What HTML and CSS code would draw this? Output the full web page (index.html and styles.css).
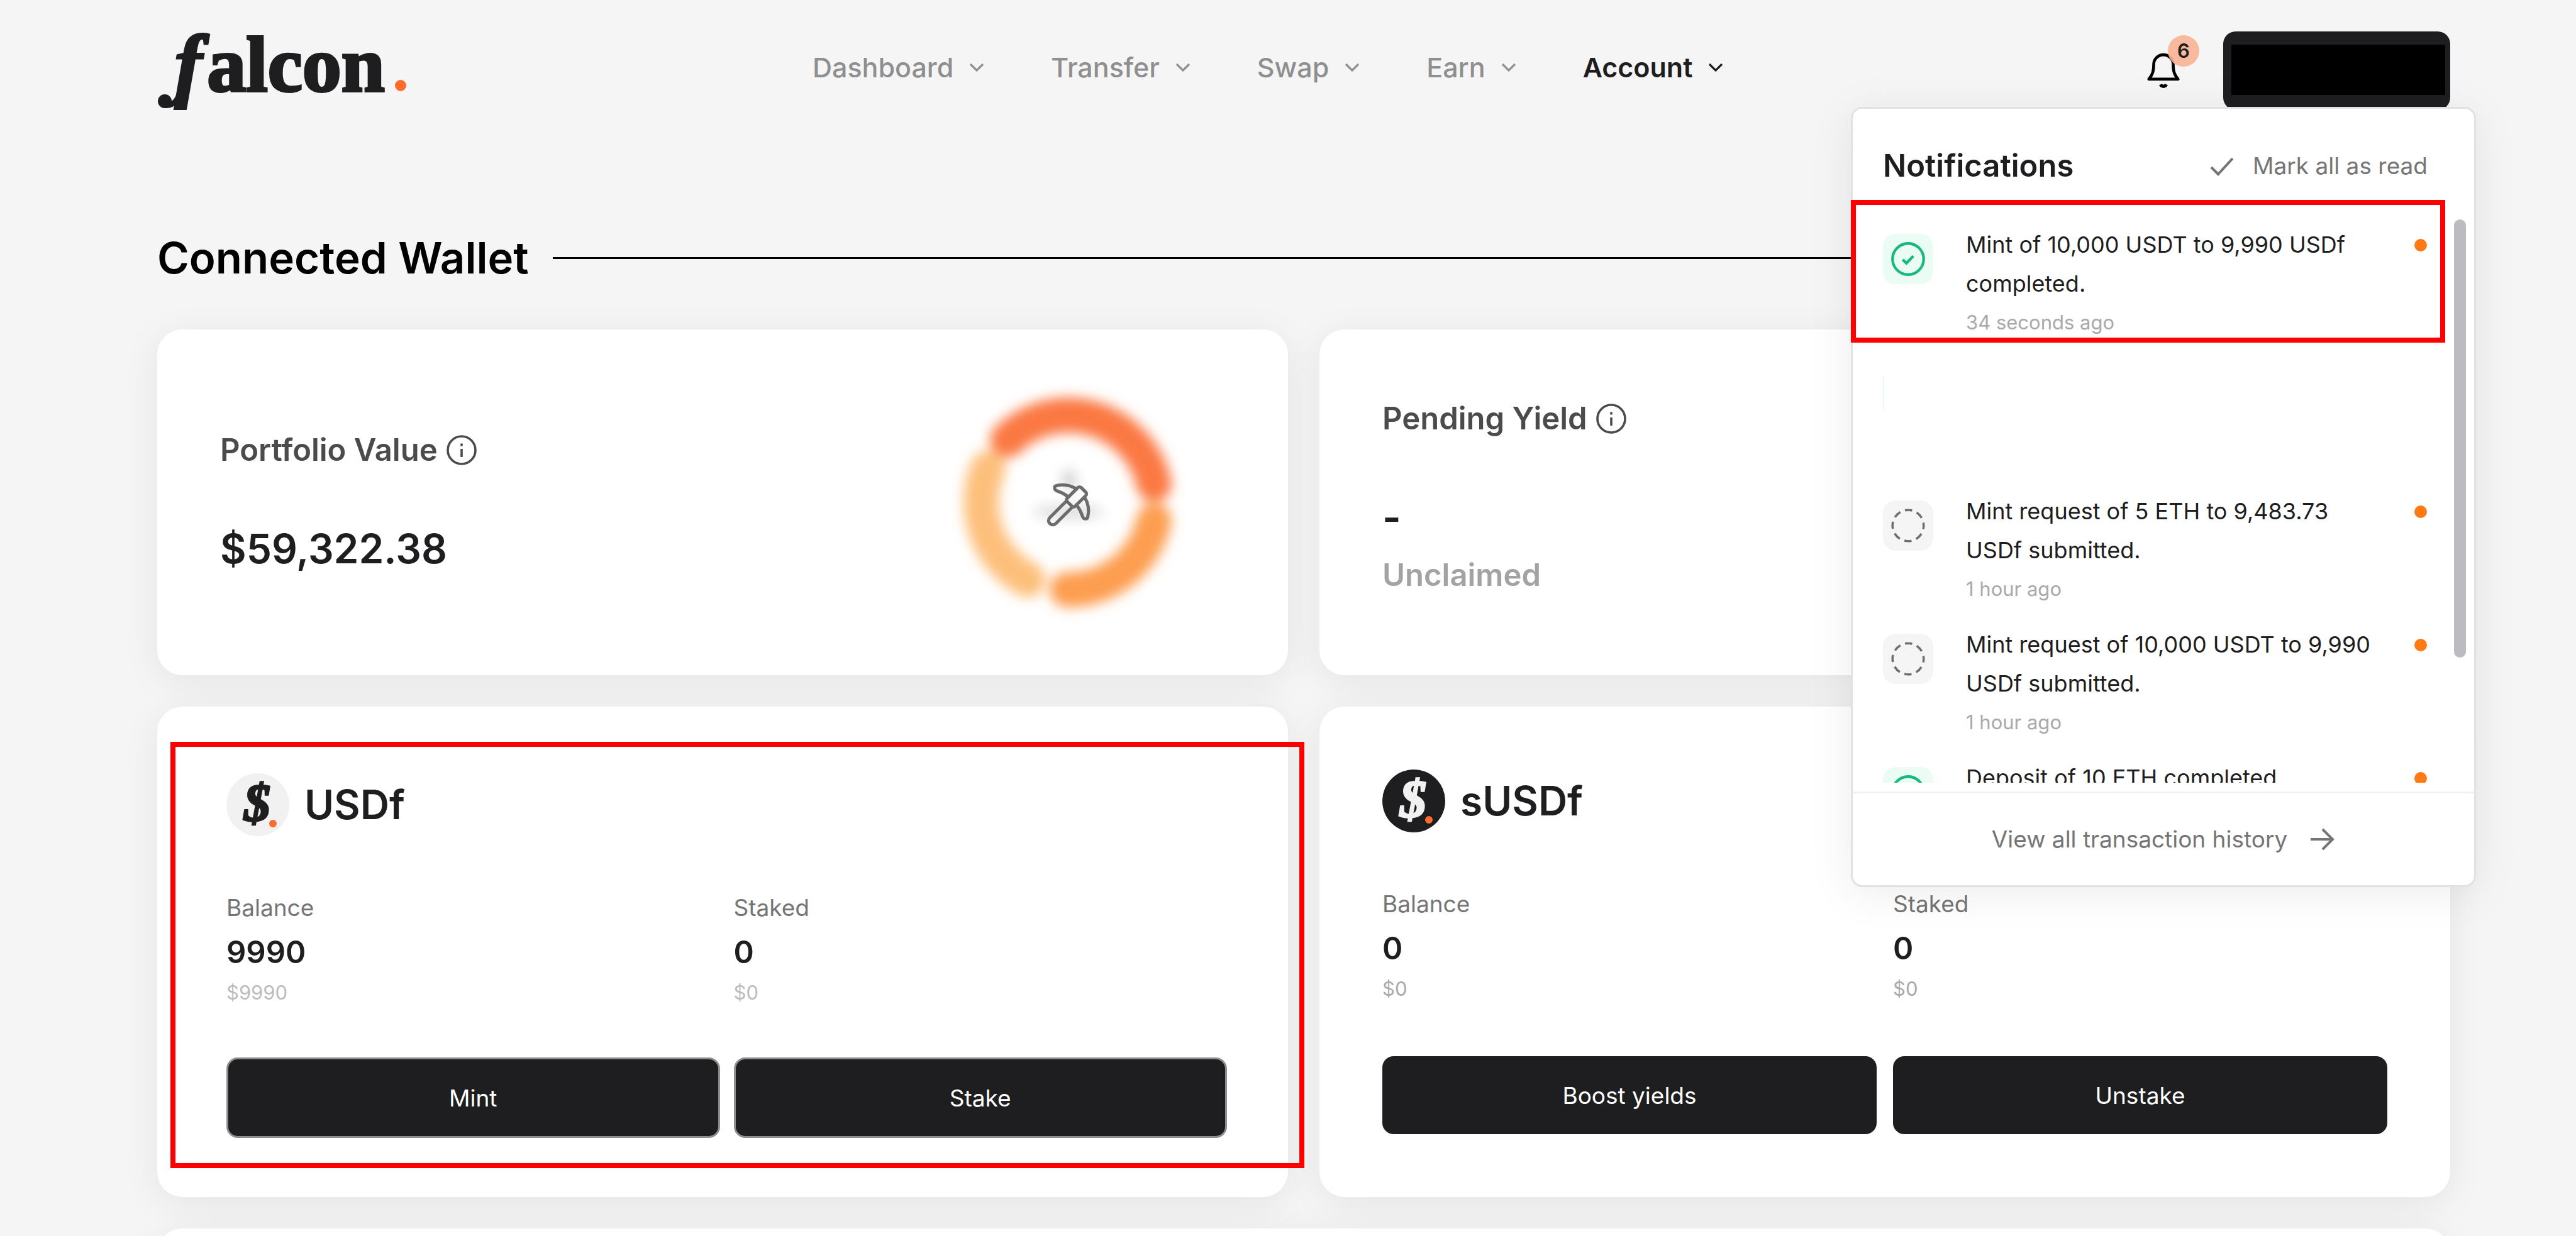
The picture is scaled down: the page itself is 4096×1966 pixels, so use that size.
FILE: index.html
```html
<!DOCTYPE html>
<html lang="en">
<head>
<meta charset="utf-8">
<title>Falcon – Account</title>
<meta name="viewport" content="width=device-width, initial-scale=1">
<link rel="stylesheet" href="styles.css">
</head>
<body>
<svg class="sprite" aria-hidden="true">
  <symbol id="chevron" viewBox="0 0 16 16"><path d="M4 6l4 4 4-4" fill="none" stroke="currentColor" stroke-width="1.3"/></symbol>
  <symbol id="info" viewBox="0 0 24 24"><g fill="none" stroke="currentColor" stroke-width="1.8"><circle cx="12" cy="12" r="11"/><path d="M12 11v6.500M12 6.800v2"/></g></symbol>
  <symbol id="done" viewBox="0 0 24 24"><g fill="none" stroke="#17b882" stroke-width="1.9"><circle cx="12" cy="12" r="11"/><path d="M8.200 12.400l2.600 2.500 4.900-5" stroke-width="2"/></g></symbol>
  <symbol id="pending" viewBox="0 0 24 24"><circle cx="12" cy="12" r="11" fill="none" stroke="#6f6f70" stroke-width="1.6" stroke-dasharray="5.200 3.440" stroke-dashoffset="2.600"/></symbol>
</svg>

<div class="page">
  <header class="header">
    <a class="logo" href="#" aria-label="falcon"><span class="logo-f">f<svg class="flourish" viewBox="0 0 60 50"><path d="M40 4C36 28 28 42 13 41" fill="none" stroke="#1e1e20" stroke-width="8"/><circle cx="12" cy="34" r="11" fill="#1e1e20"/></svg></span><span>alcon</span><i class="logo-dot"></i></a>
    <nav class="nav">
      <a href="#">Dashboard<svg><use href="#chevron"/></svg></a>
      <a href="#">Transfer<svg><use href="#chevron"/></svg></a>
      <a href="#">Swap<svg><use href="#chevron"/></svg></a>
      <a href="#">Earn<svg><use href="#chevron"/></svg></a>
      <a href="#" class="active">Account<svg><use href="#chevron"/></svg></a>
    </nav>
    <div class="actions">
      <button class="bell" type="button" aria-label="Notifications">
        <svg viewBox="0 0 24 24" fill="none" stroke="#000" stroke-width="1.8" stroke-linejoin="round"><path d="M6 8a6 6 0 0 1 12 0c0 5 1.300 7 3 9H3c1.700-2 3-4 3-9z"/><path d="M10.200 20.300a2 2 0 0 0 3.600 0" stroke-width="2"/></svg>
        <span class="badge">6</span>
      </button>
      <button class="wallet" type="button" aria-label="Wallet"><span class="wallet-mask"></span></button>

      <section class="panel">
        <div class="panel-head">
          <h2>Notifications</h2>
          <button class="text-btn" type="button"><svg viewBox="0 0 42 42"><path d="M4 23l11 11L38 9" fill="none" stroke="currentColor" stroke-width="4"/></svg>Mark all as read</button>
        </div>
        <div class="scroller">
          <ul class="list">
            <li class="item"><span class="state ok"><svg><use href="#done"/></svg></span><div class="msg"><p>Mint of 10,000 USDT to 9,990 USDf completed.</p><time>34 seconds ago</time></div><i class="dot"></i></li>
            <li class="item redacted"><span class="sliver"></span></li>
            <li class="item"><span class="state"><svg><use href="#pending"/></svg></span><div class="msg"><p>Mint request of 5 ETH to 9,483.73 USDf submitted.</p><time>1 hour ago</time></div><i class="dot"></i></li>
            <li class="item"><span class="state"><svg><use href="#pending"/></svg></span><div class="msg"><p>Mint request of 10,000 USDT to 9,990 USDf submitted.</p><time>1 hour ago</time></div><i class="dot"></i></li>
            <li class="item"><span class="state ok"><svg><use href="#done"/></svg></span><div class="msg"><p>Deposit of 10 ETH completed.</p></div><i class="dot"></i></li>
          </ul>
          <span class="thumb"></span>
        </div>
        <a class="panel-foot" href="#">View all transaction history<svg viewBox="0 0 42 42"><path d="M3 21h35M22 5l16 16-16 16" fill="none" stroke="currentColor" stroke-width="4"/></svg></a>
        <span class="mark mark-panel"></span>
      </section>
    </div>
  </header>

  <main>
    <h1 class="title">Connected Wallet</h1>
    <div class="cards">
      <section class="card summary">
        <div>
          <h3 class="caption">Portfolio Value<svg><use href="#info"/></svg></h3>
          <p class="amount">$59,322.38</p>
        </div>
        <svg class="donut" viewBox="0 0 400 400" fill="none">
          <defs><filter id="soft" x="0" y="0" width="400" height="400" filterUnits="userSpaceOnUse"><feGaussianBlur stdDeviation="10"/></filter></defs>
          <g filter="url(#soft)" stroke-width="56" stroke-linecap="round">
            <path d="M72 146A139 139 0 0 0 135 323" stroke="#fdc07c"/>
            <path d="M336 229A139 139 0 0 1 198 339" stroke="#fd9d50"/>
            <path d="M103 101A139 139 0 0 1 336 171" stroke="#fb7843"/>
          </g>
          <g filter="url(#soft)" fill="#e0e0e0"><ellipse cx="200" cy="215" rx="56" ry="12"/><ellipse cx="201" cy="164" rx="11" ry="15" fill="#ccc"/></g>
          <g transform="translate(162 166) scale(3.170)" stroke="#6c6c6c" stroke-width="1.600" stroke-linejoin="round" stroke-linecap="round">
            <path d="m14 13-8.381 8.380a1 1 0 0 1-3.001-3L11 9.999"/>
            <path d="M15.973 4.027A13 13 0 0 0 5.902 2.373c-1.398.342-1.092 2.158.277 2.601a19.900 19.900 0 0 1 5.822 3.024"/>
            <path d="M16.001 11.999a19.900 19.900 0 0 1 3.024 5.824c.444 1.369 2.260 1.676 2.603.278A13 13 0 0 0 20 8.069"/>
            <path d="M18.352 3.352a1.205 1.205 0 0 0-1.704 0l-5.296 5.296a1.205 1.205 0 0 0 0 1.704l2.296 2.296a1.205 1.205 0 0 0 1.704 0l5.296-5.296a1.205 1.205 0 0 0 0-1.704z"/>
          </g>
        </svg>
      </section>
      <section class="card summary">
        <div>
          <h3 class="caption">Pending Yield<svg><use href="#info"/></svg></h3>
          <p class="amount">-</p>
          <p class="note">Unclaimed</p>
        </div>
      </section>
      <section class="card token boxed">
        <h2 class="token-name"><svg viewBox="0 0 100 100"><circle cx="50" cy="50" r="50" fill="#f1f1f1"/><text class="coin" x="49" y="76" fill="#1e1e20" stroke="#1e1e20">$</text><circle cx="74" cy="80" r="6" fill="#ff6b2c"/></svg>USDf</h2>
        <div class="pair">
          <dl><dt>Balance</dt><dd>9990</dd><dd class="fiat">$9990</dd></dl>
          <dl><dt>Staked</dt><dd>0</dd><dd class="fiat">$0</dd></dl>
        </div>
        <div class="pair buttons"><button type="button">Mint</button><button type="button">Stake</button></div>
        <span class="mark mark-card"></span>
      </section>
      <section class="card token">
        <h2 class="token-name"><svg viewBox="0 0 100 100"><circle cx="50" cy="50" r="50" fill="#1e1e20"/><text class="coin" x="49" y="76" fill="#f1f1f1" stroke="#f1f1f1">$</text><circle cx="74" cy="80" r="6" fill="#ff6b2c"/></svg>sUSDf</h2>
        <div class="pair">
          <dl><dt>Balance</dt><dd>0</dd><dd class="fiat">$0</dd></dl>
          <dl><dt>Staked</dt><dd>0</dd><dd class="fiat">$0</dd></dl>
        </div>
        <div class="pair buttons"><button type="button">Boost yields</button><button type="button">Unstake</button></div>
      </section>
      <section class="card wide"></section>
    </div>
  </main>
</div>
</body>
</html>
```
FILE: styles.css
```css
* { box-sizing: border-box; margin: 0; padding: 0; }

body {
  background: #f5f5f5;
  color: #1e1e20;
  font-family: Inter, "Open Sans", sans-serif;
}

a { color: inherit; text-decoration: none; }
button { border: 0; background: none; color: inherit; font: inherit; cursor: pointer; }
svg { display: block; flex: none; }
ul { list-style: none; }
.sprite { position: absolute; width: 0; height: 0; }

.page {
  height: 100vh;
  overflow: hidden;
  padding: 50px 200px 0 250px;
}

/* Header */
.header { display: flex; align-items: center; height: 125px; }

.logo {
  display: flex;
  flex: 0 0 400px;
  align-items: baseline;
  padding: 0 0 20px 28px;
  font: bold 124px/124px "Liberation Serif", serif;
  -webkit-text-stroke: 4px currentColor;
}
.logo-f { position: relative; margin-right: 8px; font-size: 130px; font-style: italic; }
.flourish { position: absolute; left: -28px; top: 88px; width: 60px; height: 50px; }
.logo-dot { width: 18px; height: 18px; margin-left: 16px; border-radius: 50%; background: #ff6b2c; }

.nav {
  display: flex;
  gap: 98px;
  margin-left: 642px;
  padding-bottom: 12px;
  color: #8f8f90;
  font-size: 43px;
  font-weight: 500;
  line-height: 60px;
}
.nav a { display: flex; align-items: center; gap: 17px; }
.nav svg { width: 40px; height: 40px; }
.nav .active { color: #1e1e20; font-weight: 600; }

.actions { position: relative; display: flex; align-items: center; gap: 64px; margin-left: auto; }
.bell { position: relative; }
.bell svg { width: 62px; height: 62px; }
.badge {
  position: absolute;
  left: 38px;
  top: -26px;
  width: 50px;
  height: 50px;
  border-radius: 50%;
  background: rgba(250, 178, 148, .9);
  font-size: 31px;
  font-weight: 600;
  line-height: 50px;
  text-align: center;
}
.wallet {
  width: 361px;
  height: 125px;
  padding: 21px 8px 24px 13px;
  border-radius: 20px;
  background: #1e1e20;
}
.wallet-mask { display: block; height: 80px; background: #000; }

/* Notifications menu */
.panel {
  position: absolute;
  z-index: 2;
  right: -41px;
  top: 120px;
  width: 994px;
  border: 3px solid #e2e2e2;
  border-radius: 18px;
  background: #fff;
  box-shadow: 0 10px 70px rgba(0, 0, 0, .08);
}
.panel-head {
  display: flex;
  align-items: center;
  justify-content: space-between;
  padding: 61px 74px 55px 48px;
}
.panel-head h2 { font-size: 49px; font-weight: 600; line-height: 60px; }
.text-btn, .panel-foot {
  display: flex;
  align-items: center;
  color: #757576;
  font-size: 37px;
  line-height: 60px;
}
.text-btn { gap: 28px; }
.text-btn svg, .panel-foot svg { width: 42px; height: 42px; }
.scroller {
  display: flex;
  gap: 43px;
  height: 896px;
  margin-bottom: 14px;
  padding: 0 13px 0 48px;
  overflow: hidden;
}
.list { flex: 1; padding-top: 9px; }
.thumb { width: 19px; height: 697px; border-radius: 10px; background: #bbbbc1; }
.item {
  display: grid;
  grid-template-columns: 80px 1fr 20px;
  column-gap: 52px;
  min-height: 180px;
  margin-bottom: 32px;
}
.state {
  display: grid;
  place-items: center;
  width: 80px;
  height: 80px;
  margin-top: 14px;
  border-radius: 20px;
  background: #f5f5f5;
}
.state.ok { background: #eafcf4; }
.state svg { width: 54px; height: 54px; }
.msg { font-size: 36px; line-height: 62px; }
.msg time { display: block; margin-top: 6px; color: #a9a9aa; font-size: 31px; line-height: 50px; }
.dot { width: 20px; height: 20px; margin-top: 22px; border-radius: 50%; background: #ff7a14; }
.sliver { width: 2px; height: 56px; margin-top: 27px; background: #e8faf2; }
.panel-foot {
  justify-content: center;
  gap: 34px;
  padding: 43px 0;
  border-top: 3px solid #f2f2f2;
}

/* Red highlight frames over the page */
.mark { position: absolute; border: 8px solid #f00; pointer-events: none; }
.mark-panel { left: -3px; top: 145px; width: 945px; height: 227px; }
.mark-card { left: 21px; right: -26px; top: 56px; bottom: 46px; }

/* Wallet overview */
.title {
  display: flex;
  align-items: center;
  gap: 38px;
  margin: 193px 0 72px;
  color: #000;
  font-size: 69px;
  font-weight: 600;
  line-height: 84px;
}
.title::after { content: ""; flex: 1; height: 3px; background: #000; }

.cards { display: grid; grid-template-columns: 1fr 1fr; gap: 50px; }
.card {
  position: relative;
  border-radius: 40px;
  background: #fff;
  box-shadow: 0 10px 60px rgba(0, 0, 0, .07);
}
.wide { grid-column: 1 / -1; min-height: 400px; }

.summary {
  display: flex;
  align-items: center;
  justify-content: space-between;
  min-height: 550px;
  padding: 0 149px 0 100px;
}
.caption {
  display: flex;
  align-items: center;
  gap: 14px;
  margin-bottom: 83px;
  color: #4b4b4c;
  font-size: 49px;
  font-weight: 600;
  line-height: 64px;
}
.caption svg { width: 48px; height: 48px; }
.amount { font-size: 64px; font-weight: 600; line-height: 84px; }
.note { color: #a3a3a4; font-size: 49px; font-weight: 600; line-height: 100px; }
.donut { width: 400px; height: 400px; }

.token { padding: 100px; }
.token-name {
  display: flex;
  align-items: center;
  gap: 24px;
  font-size: 64px;
  font-weight: 600;
  line-height: 100px;
}
.token-name svg { width: 100px; height: 100px; }
.coin { font: italic bold 84px "Liberation Serif", serif; text-anchor: middle; stroke-width: 3px; }
.pair { display: grid; grid-template-columns: 1fr 1fr; gap: 26px; margin-top: 84px; }
.pair dt { color: #757576; font-size: 37px; line-height: 60px; }
.pair dd { margin-top: 6px; font-size: 49px; font-weight: 600; line-height: 70px; }
.pair .fiat { color: #a9a9aa; font-size: 31px; font-weight: 400; line-height: 46px; }
.buttons button {
  height: 124px;
  border-radius: 18px;
  background: #1e1e20;
  color: #fff;
  font-size: 37px;
}
.boxed { padding: 106px 97px 94px 110px; }
.boxed .pair { gap: 22px; }
.boxed .fiat { color: #bcbcbd; }
.boxed .buttons { margin-top: 80px; }
.boxed .buttons button { height: 128px; border: 3px solid #8e8e8f; }
```
